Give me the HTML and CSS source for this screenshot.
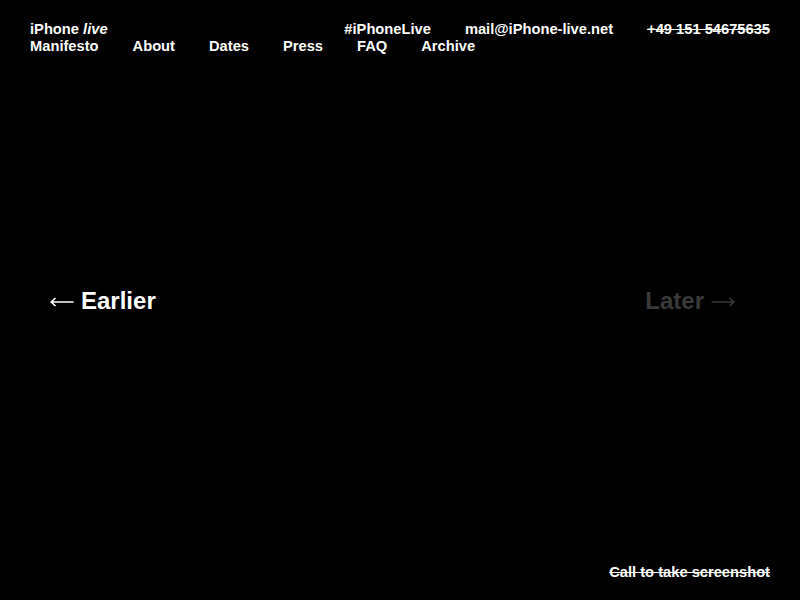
FILE: index.html
```html
<!DOCTYPE html>
<html>
<head>
<meta charset="utf-8">
<link rel="stylesheet" href="styles.css">
</head>
<body>
<div class="page">
  <header class="header">
    <div class="row">
      <div class="brand">iPhone <em>live</em></div>
      <div class="contact">
        <span>#iPhoneLive</span>
        <span>mail@iPhone-live.net</span>
        <span class="strike">+49 151 54675635</span>
      </div>
    </div>
    <nav class="nav">
      <span>Manifesto</span>
      <span>About</span>
      <span>Dates</span>
      <span>Press</span>
      <span>FAQ</span>
      <span>Archive</span>
    </nav>
  </header>
  <main class="main">
    <span class="pager"><svg class="arrow arrow-left" width="24" height="10" viewBox="0 0 24 10"><path d="M23.5 5H1.5M5.5 1L1.2 5L5.5 9" fill="none" stroke="currentColor" stroke-width="1.6"/></svg>Earlier</span>
    <span class="pager disabled">Later<svg class="arrow arrow-right" width="24" height="10" viewBox="0 0 24 10"><path d="M0.5 5H22.5M18.5 1L22.8 5L18.5 9" fill="none" stroke="currentColor" stroke-width="1.6"/></svg></span>
  </main>
  <footer class="footer">
    <span class="strike">Call to take screenshot</span>
  </footer>
</div>
</body>
</html>
```
FILE: styles.css
```css
html, body {
  margin: 0;
  padding: 0;
  background: #000;
  color: #fff;
  font-family: "Liberation Sans", Arial, sans-serif;
  font-weight: bold;
}
.page {
  height: 600px;
  display: flex;
  flex-direction: column;
}
.header {
  padding: 21px 30px 0;
  font-size: 14.7px;
  line-height: 17px;
}
.row {
  display: flex;
  justify-content: space-between;
}
.contact {
  display: flex;
  gap: 34px;
}
.nav {
  display: flex;
  gap: 34px;
}
.strike {
  text-decoration: line-through;
}
.main {
  flex: 1;
  display: flex;
  justify-content: space-between;
  align-items: center;
  padding: 0 65px 18px 50px;
  font-size: 24px;
  line-height: 28px;
}
.arrow {
  vertical-align: middle;
}
.arrow-left {
  margin-right: 7px;
}
.arrow-right {
  margin-left: 7px;
}
.pager.disabled {
  color: #3a3a3a;
}
.footer {
  display: flex;
  justify-content: flex-end;
  padding: 0 30px 19px;
  font-size: 14.7px;
  line-height: 17px;
}
```
